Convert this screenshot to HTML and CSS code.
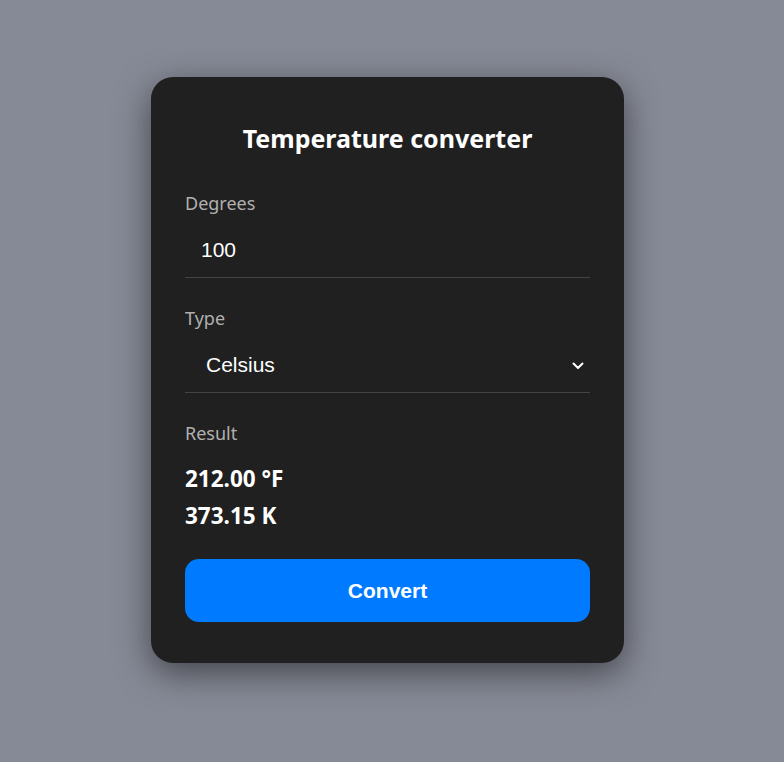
FILE: index.html
```html
<!DOCTYPE html>
<html lang="en">
<head>
<meta charset="utf-8">
<title>Temperature converter</title>
<link rel="stylesheet" href="styles.css">
</head>
<body>
  <main class="card">
    <h1 class="title">Temperature converter</h1>
    <label class="label" for="deg">Degrees</label>
    <input class="field" id="deg" type="text" value="100">
    <label class="label label-gap" for="type">Type</label>
    <div class="select-wrap">
      <select class="field select" id="type">
        <option>Celsius</option>
        <option>Fahrenheit</option>
        <option>Kelvin</option>
      </select>
      <svg class="chevron" width="12" height="8" viewBox="0 0 12 8" aria-hidden="true"><path d="M1.5 1.5 L6 6 L10.5 1.5" fill="none" stroke="#ffffff" stroke-width="2" stroke-linecap="round" stroke-linejoin="round"/></svg>
    </div>
    <div class="label label-gap">Result</div>
    <div class="results">
      <div>212.00 °F</div>
      <div>373.15 K</div>
    </div>
    <button class="btn" type="button">Convert</button>
  </main>
</body>
</html>
```

FILE: styles.css
```css
* { box-sizing: border-box; }
html, body { margin: 0; padding: 0; }
body {
  background: #868a96;
  min-height: 762px;
  display: flex;
  justify-content: center;
  align-items: flex-start;
  padding: 77px 9px 0 0;
  font-family: "Noto Sans", "Open Sans", sans-serif;
}
.card {
  width: 473px;
  background: #202020;
  border-radius: 22px;
  padding: 34px 34px 41px;
  display: flex;
  flex-direction: column;
  box-shadow: 0 10px 34px rgba(0, 0, 0, 0.5);
}
.title {
  margin: 11px 0 39px;
  font-size: 25px;
  line-height: 32px;
  font-weight: 700;
  color: #ffffff;
  text-align: center;
}
.label {
  display: block;
  font-size: 18px;
  line-height: 21px;
  color: #b0b0b0;
  margin-bottom: 8px;
}
.label-gap { margin-top: 30px; }
.field {
  width: 100%;
  height: 56px;
  background: transparent;
  border: none;
  border-bottom: 1px solid #444444;
  color: #ffffff;
  font-family: "Liberation Sans", Arial, sans-serif;
  font-size: 21px;
  padding: 0 16px;
  outline: none;
  margin: 0;
}
.select-wrap { position: relative; }
.select {
  appearance: none;
  -webkit-appearance: none;
  padding-left: 21px;
  border-radius: 0;
}
.select option { background: #202020; color: #fff; }
.chevron {
  position: absolute;
  right: 6px;
  top: 25px;
  pointer-events: none;
}
.results {
  margin-top: 8px;
  font-size: 22.5px;
  line-height: 37px;
  font-weight: 700;
  color: #ffffff;
}
.btn {
  margin-top: 25px;
  height: 63px;
  border: none;
  border-radius: 14px;
  background: #007bff;
  color: #ffffff;
  font-family: "Liberation Sans", Arial, sans-serif;
  font-size: 21px;
  font-weight: 700;
  cursor: pointer;
}
```
